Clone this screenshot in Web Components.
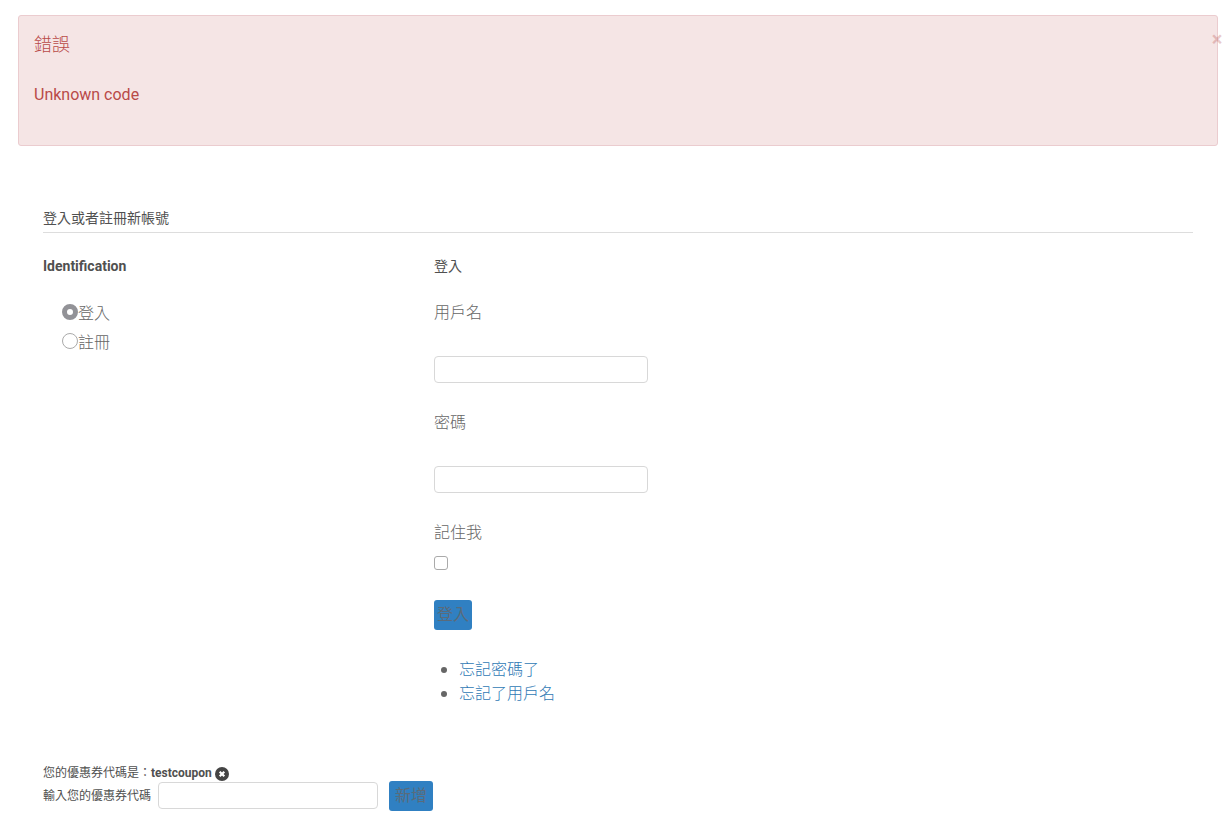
<!DOCTYPE html>
<html lang="zh-Hant">
<head>
<meta charset="utf-8">
<meta name="viewport" content="width=device-width, initial-scale=1">
<title>登入或者註冊新帳號</title>
<style>
  body {
    margin: 0;
    background: #fff;
    color: #666;
    font: 300 16px/24px Roboto, "Noto Sans CJK TC", sans-serif;
  }
</style>
</head>
<body>
<checkout-page></checkout-page>

<script>
  const define = (name, html) => customElements.define(name, class extends HTMLElement {
    constructor() {
      super();
      const template = document.createElement('template');
      template.innerHTML = html;
      this.attachShadow({ mode: 'open' }).append(template.content.cloneNode(true));
    }
    connectedCallback() {
      const control = this.shadowRoot.querySelector('input');
      if (!control) return;
      if (this.hasAttribute('type')) control.type = this.getAttribute('type');
      control.checked = this.hasAttribute('checked');
      control.addEventListener('change', () => {
        if (control.type !== 'radio') return;
        for (const peer of this.parentElement.children) {
          if (peer !== this) peer.shadowRoot.querySelector('input').checked = false;
        }
      });
    }
  });

  define('alert-message', `
    <style>
      :host { display: block; position: relative; box-sizing: border-box; padding: 16px 15px 38px;
        border: 1px solid #ebcccf; border-radius: 3px; background: #f5e5e5; color: #b94a48; }
      h4 { margin: 0 0 25px; font-size: 18px; line-height: 26px; font-weight: 300; }
      p { margin: 0; font-weight: 400; }
      button { position: absolute; top: 11px; right: -6px; border: 0; padding: 0; width: 12px; height: 24px;
        background: none; color: #a33; opacity: .25; font: 700 20px/24px Roboto, sans-serif; text-align: center; }
    </style>
    <button type="button" aria-label="Close">×</button>
    <h4><slot name="title"></slot></h4>
    <p><slot></slot></p>`);

  define('section-title', `
    <style>
      :host { display: block; font-weight: 400; }
      h3 { margin: 0; font-size: 14px; line-height: 20px; font-weight: inherit; color: #505050; }
    </style>
    <h3><slot></slot></h3>`);

  define('radio-option', `
    <style>
      :host { display: block; }
      label { display: flex; align-items: center; }
      input { appearance: none; box-sizing: border-box; margin: 0 0 4px; width: 16px; height: 16px;
        border: 1px solid #aaa; border-radius: 50%; background: #fff; }
      input:checked { border: 5px solid #929297; }
    </style>
    <label><input type="radio"><span><slot></slot></span></label>`);

  define('text-field', `
    <style>
      :host { display: block; }
      label { display: block; margin-bottom: 31px; }
      input { display: block; box-sizing: border-box; width: 214px; height: 27px; padding: 4px 6px;
        border: 1px solid #d8d8d8; border-radius: 4px; background: #fff; color: #555; font: inherit; font-size: 14px; }
    </style>
    <label for="field"><slot></slot></label>
    <input id="field" type="text">`);

  define('check-field', `
    <style>
      :host { display: block; padding-bottom: 2px; }
      label { display: block; margin-bottom: 11px; }
      input { appearance: none; display: block; box-sizing: border-box; margin: 0; width: 14px; height: 14px;
        border: 1px solid #aaa; border-radius: 3px; background: #fff; }
      input:checked { background: #999; }
    </style>
    <label for="check"><slot></slot></label>
    <input id="check" type="checkbox">`);

  define('primary-button', `
    <style>
      :host { display: inline-block; font-weight: 400; }
      button { display: block; box-sizing: border-box; height: 30px; padding: 0 var(--button-pad, 3px);
        border: 0; border-radius: 3px; background: #3080c2; color: #5a6b7a; font: inherit; font-size: 16px; line-height: 30px; }
    </style>
    <button type="button"><slot></slot></button>`);

  define('help-links', `
    <style>
      :host { display: block; }
      ul { margin: 0; padding: 0 0 0 25px; }
      li { height: 24px; }
      li::marker { font-size: 18px; line-height: 20px; }
      a { color: #3079b5; text-decoration: none; }
    </style>
    <ul>
      <li><a href="#password">忘記密碼了</a></li>
      <li><a href="#username">忘記了用戶名</a></li>
    </ul>`);

  define('coupon-form', `
    <style>
      :host { display: block; font-size: 12px; color: #505050; font-weight: 400; --button-pad: 6px; }
      p { display: flex; align-items: center; margin: 0; height: 16px; line-height: 16px; }
      a { display: flex; margin-left: 3px; padding-top: 2px; }
      form { display: flex; align-items: center; }
      input { box-sizing: border-box; width: 220px; height: 27px; margin: 0 11px 1px 7px; padding: 4px 6px;
        border: 1px solid #d8d8d8; border-radius: 4px; background: #fff; color: #555; font: inherit; font-size: 14px; }
    </style>
    <p>您的優惠券代碼是：<strong>testcoupon</strong><a href="#remove" aria-label="Remove coupon"><svg width="14" height="14" viewBox="0 0 14 14"><circle cx="7" cy="7" r="7" fill="#444"/><path d="M4.7 4.7l4.6 4.6M9.3 4.7L4.7 9.3" stroke="#fff" stroke-width="2.2"/></svg></a></p>
    <form>
      <label for="coupon">輸入您的優惠券代碼</label>
      <input id="coupon" type="text">
      <primary-button>新增</primary-button>
    </form>`);

  define('checkout-page', `
    <style>
      :host { display: block; padding: 15px 12px 26px 18px; }
      main { padding: 62px 25px 0; }
      .heading { padding-bottom: 4px; border-bottom: 1px solid #ddd; }
      .columns { display: grid; grid-template-columns: 34fr 66fr; padding-top: 23px; }
      .heavy { font-weight: 700; }
      .options { display: grid; gap: 5px; margin: 26px 0 0 19px; }
      .login { display: grid; gap: 28px; margin-top: 25px; justify-items: start; }
      coupon-form { margin-top: 59px; }
    </style>
    <alert-message><span slot="title">錯誤</span>Unknown code</alert-message>
    <main>
      <section-title class="heading">登入或者註冊新帳號</section-title>
      <div class="columns">
        <section>
          <section-title class="heavy">Identification</section-title>
          <div class="options">
            <radio-option checked>登入</radio-option>
            <radio-option>註冊</radio-option>
          </div>
        </section>
        <section>
          <section-title>登入</section-title>
          <div class="login">
            <text-field>用戶名</text-field>
            <text-field type="password">密碼</text-field>
            <check-field>記住我</check-field>
            <primary-button>登入</primary-button>
            <help-links></help-links>
          </div>
        </section>
      </div>
      <coupon-form></coupon-form>
    </main>`);
</script>
</body>
</html>
